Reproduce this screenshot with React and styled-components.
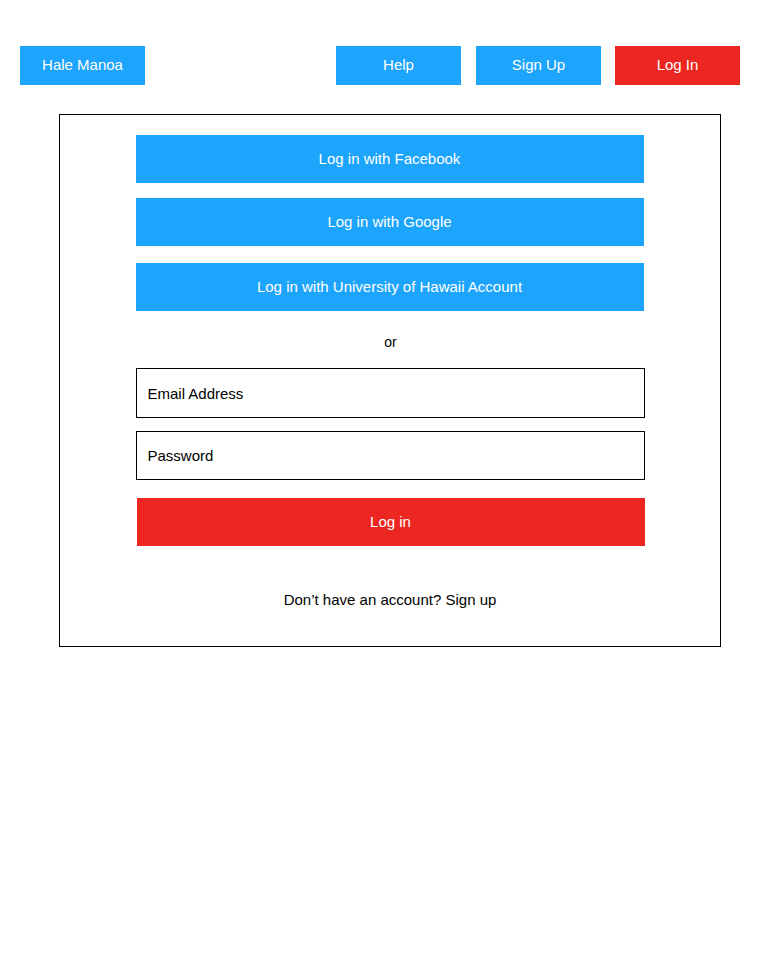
import React from "react";
import styled, { createGlobalStyle } from "styled-components";

const blue = "#1da4fd";
const red = "#ec2721";

const GlobalStyle = createGlobalStyle`
  body {
    margin: 0;
    background: #fff;
    font-family: "Liberation Sans", Arial, Helvetica, sans-serif;
    color: #000;
  }
`;

const Page = styled.div`
  padding-top: 46px;
`;

const Nav = styled.nav`
  display: flex;
  align-items: center;
  padding: 0 19px 0 20px;
`;

const NavGroup = styled.div`
  display: flex;
  gap: 14px;
  margin-left: auto;
`;

const NavButton = styled.button`
  width: 125px;
  height: 39px;
  border: none;
  border-radius: 0;
  padding: 0 0 2px;
  margin-right: ${(p) => p.$extra || 0}px;
  background: ${(p) => (p.$red ? red : blue)};
  color: #fff;
  font-family: inherit;
  font-size: 15px;
  cursor: pointer;
`;

const Card = styled.div`
  width: 660px;
  margin: 29px 0 0 59px;
  border: 1px solid #000;
  padding: 20px 0 36px;
  display: flex;
  flex-direction: column;
  align-items: center;
`;

const Column = styled.div`
  width: 509px;
  display: flex;
  flex-direction: column;
`;

const SocialButton = styled.button`
  width: 508px;
  height: 48px;
  border: none;
  border-radius: 0;
  padding: 0 0 2px;
  margin-top: ${(p) => p.$gap || 0}px;
  background: ${blue};
  color: #fff;
  font-family: inherit;
  font-size: 15px;
  cursor: pointer;
`;

const Or = styled.div`
  text-align: center;
  font-size: 14px;
  line-height: 20px;
  margin: 21px 0 16px;
  padding-left: 1px;
`;

const Input = styled.input`
  box-sizing: border-box;
  width: 509px;
  height: ${(p) => p.$h}px;
  margin-top: ${(p) => p.$gap || 0}px;
  border: 1px solid #000;
  border-radius: 0;
  padding: 0 11px;
  font-family: inherit;
  font-size: 15px;
  outline: none;
  &::placeholder {
    color: #000;
    opacity: 1;
  }
`;

const SubmitButton = styled.button`
  width: 508px;
  height: 48px;
  margin: 18px 0 0 1px;
  border: none;
  border-radius: 0;
  padding: 0 0 2px;
  background: ${red};
  color: #fff;
  font-family: inherit;
  font-size: 15px;
  cursor: pointer;
`;

const Footer = styled.div`
  text-align: center;
  font-size: 15px;
  line-height: 20px;
  margin-top: 44px;
`;

export default function App() {
  return (
    <Page>
      <GlobalStyle />
      <Nav>
        <NavButton>Hale Manoa</NavButton>
        <NavGroup>
          <NavButton $extra={1}>Help</NavButton>
          <NavButton>Sign Up</NavButton>
          <NavButton $red>Log In</NavButton>
        </NavGroup>
      </Nav>
      <Card>
        <Column>
          <SocialButton>Log in with Facebook</SocialButton>
          <SocialButton $gap={15}>Log in with Google</SocialButton>
          <SocialButton $gap={17}>Log in with University of Hawaii Account</SocialButton>
          <Or>or</Or>
          <Input $h={50} placeholder="Email Address" />
          <Input $h={49} $gap={13} type="password" placeholder="Password" />
          <SubmitButton>Log in</SubmitButton>
          <Footer>Don’t have an account? Sign up</Footer>
        </Column>
      </Card>
    </Page>
  );
}
